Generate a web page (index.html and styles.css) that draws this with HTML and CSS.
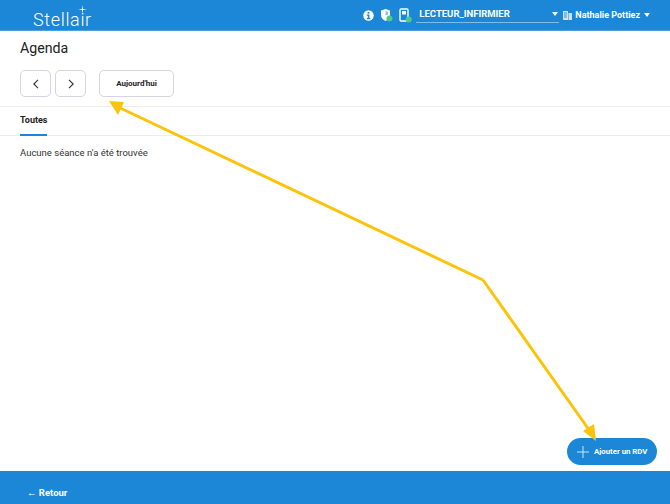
FILE: index.html
```html
<!DOCTYPE html>
<html lang="fr">
<head>
<meta charset="utf-8">
<title>Agenda</title>
<link rel="stylesheet" href="styles.css">
</head>
<body>
<div class="app">
  <header class="topbar">
    <div class="logo">Stellair<svg class="logo-star" width="9" height="9" viewBox="0 0 9 9"><path d="M4.5 0 5 4 9 4.5 5 5 4.5 9 4 5 0 4.5 4 4Z" fill="#fff"/></svg></div>
    <div class="tools">
      <svg class="ic" width="11" height="11" viewBox="0 0 12 12"><circle cx="6" cy="6" r="5.7" fill="#fff"/><rect x="5" y="2.2" width="2" height="1.8" fill="#1b87d6"/><path d="M4.2 5H7V8.8H8V10H4.2V8.8H5.2V6.2H4.2Z" fill="#1b87d6"/></svg>
      <svg class="ic ic-shield" width="13" height="14" viewBox="0 0 13 14"><path d="M5.5 1 10 2.6V7C10 10 8 12 5.5 13 3 12 1 10 1 7V2.6Z" fill="#fff"/><path d="M5.5 3 8 4V7H5.5Z" fill="#1b87d6" opacity=".5"/><circle cx="9.5" cy="10.5" r="3" fill="#4fc98a"/></svg>
      <svg class="ic ic-reader" width="13" height="15" viewBox="0 0 13 15"><rect x="1" y="1" width="8" height="12" rx="1" fill="none" stroke="#fff" stroke-width="1.4"/><rect x="3" y="3" width="4" height="3.5" fill="#fff"/><circle cx="9.7" cy="11.5" r="3" fill="#4fc98a"/></svg>
      <div class="select"><span>LECTEUR_INFIRMIER</span><i class="caret"></i></div>
      <svg class="ic ic-user" width="9" height="10" viewBox="0 0 9 10"><path d="M0 1H5V10H0ZM5.5 3H9V10H5.5Z" fill="#cfe3f5"/><path d="M1 3H4M1 5H4M1 7H4" stroke="#1b87d6" stroke-width=".8"/></svg>
      <div class="user"><span>Nathalie Pottiez</span><i class="caret"></i></div>
    </div>
  </header>
  <main class="content">
    <section class="head">
      <h1 class="title">Agenda</h1>
      <div class="actions">
        <button class="btn btn-icon"><svg width="8" height="10" viewBox="0 0 8 10"><path d="M6 .8 1.8 5 6 9.2" fill="none" stroke="#333" stroke-width="1.1"/></svg></button>
        <button class="btn btn-icon"><svg width="8" height="10" viewBox="0 0 8 10"><path d="M2 .8 6.2 5 2 9.2" fill="none" stroke="#333" stroke-width="1.1"/></svg></button>
        <button class="btn btn-today">Aujourd'hui</button>
      </div>
    </section>
    <nav class="tabs"><span class="tab">Toutes</span></nav>
    <p class="empty">Aucune séance n'a été trouvée</p>
    <button class="fab"><svg width="12" height="12" viewBox="0 0 12 12"><path d="M6 0V12M0 6H12" stroke="#cfe6f8" stroke-width="1"/></svg><span>Ajouter un RDV</span></button>
    <svg class="arrows" width="670" height="504" viewBox="0 0 670 504">
      <path d="M483 280 116 106" stroke="#fcc30b" stroke-width="3" fill="none"/>
      <path d="M483 280 592 434" stroke="#fcc30b" stroke-width="3" fill="none"/>
      <path d="M109 101 124 102 118 115Z" fill="#fcc30b"/>
      <path d="M596 441 583 431 594 424Z" fill="#fcc30b"/>
    </svg>
  </main>
  <footer class="bottombar"><span>← Retour</span></footer>
</div>
</body>
</html>
```
FILE: styles.css
```css
* { box-sizing: border-box; }
html, body { margin: 0; height: 100%; }
body { font-family: Roboto, "Liberation Sans", sans-serif; color: #222; background: #fff; overflow: hidden; }
.app { display: flex; flex-direction: column; height: 504px; position: relative; }
.topbar { height: 31px; background: #1b87d6; border-bottom: 1px solid #4ea2e0; display: flex; align-items: center; justify-content: space-between; padding: 0 20px 0 33px; color: #fff; flex: none; }
.logo { font-size: 18px; font-weight: 300; letter-spacing: .65px; position: relative; top: 4px; }
.logo-star { position: absolute; left: 45px; top: -4px; }
.tools { display: flex; align-items: center; font-size: 9px; font-weight: 700; }
.ic { flex: none; display: block; }
.ic-shield { margin-left: 6px; }
.ic-reader { margin-left: 6px; }
.select { width: 143px; margin-left: 4px; height: 16px; border-bottom: 1px solid #7fbcea; display: flex; justify-content: space-between; align-items: center; padding: 0 1px 2px 3px; font-size: 9.5px; }
.ic-user { margin-left: 4px; }
.user { margin-left: 3px; display: flex; align-items: center; gap: 4px; }
.caret { width: 0; height: 0; border-left: 3.5px solid transparent; border-right: 3.5px solid transparent; border-top: 4px solid #fff; }
.content { flex: 1; display: flex; flex-direction: column; min-height: 0; }
.head { padding: 0 20px; height: 76px; border-bottom: 1px solid #ececec; }
.title { margin: 8px 0 0; font-size: 14.2px; font-weight: 400; line-height: 18px; }
.actions { display: flex; margin-top: 13px; gap: 4px; }
.btn { height: 27px; border: 1px solid #d5d5e0; border-radius: 5px; background: #fff; font-family: inherit; padding: 0; display: flex; align-items: center; justify-content: center; }
.btn-icon { width: 31px; }
.btn-today { width: 75px; margin-left: 9px; font-size: 8px; font-weight: 700; color: #222; }
.tabs { height: 29px; padding: 0 20px; border-bottom: 1px solid #ececec; display: flex; }
.tab { font-size: 9px; font-weight: 700; line-height: 27px; height: 29px; border-bottom: 2px solid #1b87d6; width: 27px; }
.empty { margin: 10px 20px 0; font-size: 9.5px; line-height: 13px; color: #333; }
.fab { position: absolute; left: 567px; top: 438px; width: 90px; height: 27px; border: 0; border-radius: 14px; background: #1b87d6; color: #fff; font-family: inherit; font-size: 7.8px; font-weight: 700; display: flex; align-items: center; gap: 5px; padding: 0 0 0 10px; }
.arrows { position: absolute; left: 0; top: 0; pointer-events: none; }
.bottombar { height: 33px; flex: none; background: #1b87d6; color: #fff; font-size: 9.5px; font-weight: 700; padding: 15px 0 0 27px; line-height: 13px; }
```
